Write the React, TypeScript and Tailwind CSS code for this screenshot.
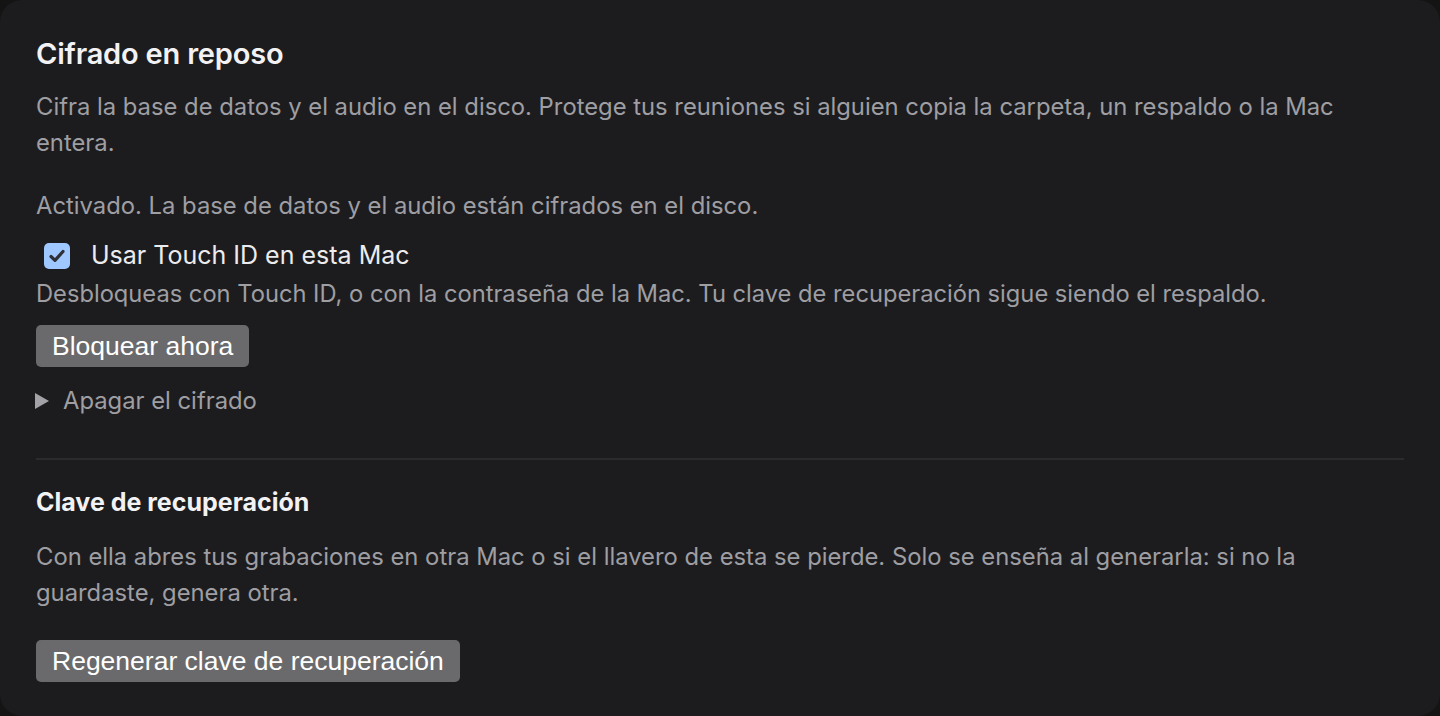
import React from "react";

export default function App() {
  return (
    <div className="w-[1440px] h-[716px] bg-[#141415] overflow-hidden" style={{ fontFamily: "Inter, 'Noto Sans', sans-serif" }}>
      <div className="w-full h-full bg-[#1c1c1e] rounded-[22px] px-[36px] pt-[37px]">
        <h2 className="text-[29px] leading-[34px] font-semibold text-[#f2f2f4] tracking-[-0.2px]">Cifrado en reposo</h2>
        <p className="mt-[18px] text-[23.8px] leading-[36px] text-[#9e9ea3]">
          Cifra la base de datos y el audio en el disco. Protege tus reuniones si alguien copia la carpeta, un respaldo o la Mac entera.
        </p>
        <p className="mt-[27px] text-[23.8px] leading-[36px] text-[#9e9ea3]">
          Activado. La base de datos y el audio están cifrados en el disco.
        </p>
        <label className="mt-[13px] flex items-center h-[38px] pl-[8px]">
          <span className="w-[26px] h-[26px] rounded-[5px] bg-[#9ec8ff] flex items-center justify-center">
            <svg width="20" height="20" viewBox="0 0 20 20" fill="none">
              <path d="M4 10.5 L8 14.3 L16 5.5" stroke="#2f3035" strokeWidth="3.2" strokeLinecap="round" strokeLinejoin="round" />
            </svg>
          </span>
          <span className="ml-[21px] text-[25px] text-[#ececee]">Usar Touch ID en esta Mac</span>
        </label>
        <p className="mt-[1px] text-[23.7px] leading-[36px] text-[#9e9ea3]">
          Desbloqueas con Touch ID, o con la contraseña de la Mac. Tu clave de recuperación sigue siendo el respaldo.
        </p>
        <button className="mt-[13px] h-[42px] px-[16px] rounded-[5px] bg-[#6a6a6c] text-white text-[26.5px] leading-[42px] block" style={{ fontFamily: "'Liberation Sans', Arial, sans-serif" }}>
          Bloquear ahora
        </button>
        <div className="mt-[16px] flex items-center h-[36px] text-[23.8px] text-[#9e9ea3]">
          <svg width="14" height="16" viewBox="0 0 14 16" className="mr-[14px] -ml-[1px]">
            <path d="M0 0 L14 8 L0 16 Z" fill="#a3a3a7" />
          </svg>
          Apagar el cifrado
        </div>
        <div className="mt-[39px] h-[2px] bg-[#2b2b2e]" />
        <h3 className="mt-[27px] text-[25px] leading-[30px] font-bold text-[#f2f2f4]">Clave de recuperación</h3>
        <p className="mt-[22px] text-[23.8px] leading-[36px] text-[#9e9ea3]">
          Con ella abres tus grabaciones en otra Mac o si el llavero de esta se pierde. Solo se enseña al generarla: si no la guardaste, genera otra.
        </p>
        <button className="mt-[29px] h-[42px] px-[16px] rounded-[5px] bg-[#6a6a6c] text-white text-[26.5px] leading-[42px] block" style={{ fontFamily: "'Liberation Sans', Arial, sans-serif" }}>
          Regenerar clave de recuperación
        </button>
      </div>
    </div>
  );
}
